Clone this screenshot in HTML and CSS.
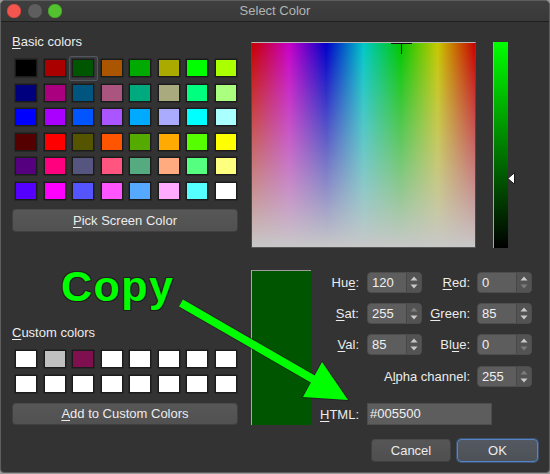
FILE: index.html
```html
<!DOCTYPE html>
<html>
<head>
<meta charset="utf-8">
<title>Select Color</title>
<link rel="stylesheet" href="styles.css">
</head>
<body>
<div class="window">
  <div class="titlebar">
    <div class="lights"><span class="light red"></span><span class="light gray"></span><span class="light green"></span></div>
    <div class="title">Select Color</div>
    <div></div>
  </div>
  <div class="content">
    <div class="left">
      <div class="label basic-label"><span class="mn">B</span>asic colors</div>
      <div class="swatches basic">
        <div class="cell"><div class="sw" style="background:#000000"></div></div>
        <div class="cell"><div class="sw" style="background:#aa0000"></div></div>
        <div class="cell sel"><div class="sw" style="background:#005500"></div></div>
        <div class="cell"><div class="sw" style="background:#aa5500"></div></div>
        <div class="cell"><div class="sw" style="background:#00aa00"></div></div>
        <div class="cell"><div class="sw" style="background:#aaaa00"></div></div>
        <div class="cell"><div class="sw" style="background:#00ff00"></div></div>
        <div class="cell"><div class="sw" style="background:#aaff00"></div></div>

        <div class="cell"><div class="sw" style="background:#00007f"></div></div>
        <div class="cell"><div class="sw" style="background:#aa007f"></div></div>
        <div class="cell"><div class="sw" style="background:#00557f"></div></div>
        <div class="cell"><div class="sw" style="background:#aa557f"></div></div>
        <div class="cell"><div class="sw" style="background:#00aa7f"></div></div>
        <div class="cell"><div class="sw" style="background:#aaaa7f"></div></div>
        <div class="cell"><div class="sw" style="background:#00ff7f"></div></div>
        <div class="cell"><div class="sw" style="background:#aaff7f"></div></div>

        <div class="cell"><div class="sw" style="background:#0000ff"></div></div>
        <div class="cell"><div class="sw" style="background:#aa00ff"></div></div>
        <div class="cell"><div class="sw" style="background:#0055ff"></div></div>
        <div class="cell"><div class="sw" style="background:#aa55ff"></div></div>
        <div class="cell"><div class="sw" style="background:#00aaff"></div></div>
        <div class="cell"><div class="sw" style="background:#aaaaff"></div></div>
        <div class="cell"><div class="sw" style="background:#00ffff"></div></div>
        <div class="cell"><div class="sw" style="background:#aaffff"></div></div>

        <div class="cell"><div class="sw" style="background:#550000"></div></div>
        <div class="cell"><div class="sw" style="background:#ff0000"></div></div>
        <div class="cell"><div class="sw" style="background:#555500"></div></div>
        <div class="cell"><div class="sw" style="background:#ff5500"></div></div>
        <div class="cell"><div class="sw" style="background:#55aa00"></div></div>
        <div class="cell"><div class="sw" style="background:#ffaa00"></div></div>
        <div class="cell"><div class="sw" style="background:#55ff00"></div></div>
        <div class="cell"><div class="sw" style="background:#ffff00"></div></div>

        <div class="cell"><div class="sw" style="background:#55007f"></div></div>
        <div class="cell"><div class="sw" style="background:#ff007f"></div></div>
        <div class="cell"><div class="sw" style="background:#55557f"></div></div>
        <div class="cell"><div class="sw" style="background:#ff557f"></div></div>
        <div class="cell"><div class="sw" style="background:#55aa7f"></div></div>
        <div class="cell"><div class="sw" style="background:#ffaa7f"></div></div>
        <div class="cell"><div class="sw" style="background:#55ff7f"></div></div>
        <div class="cell"><div class="sw" style="background:#ffff7f"></div></div>

        <div class="cell"><div class="sw" style="background:#5500ff"></div></div>
        <div class="cell"><div class="sw" style="background:#ff00ff"></div></div>
        <div class="cell"><div class="sw" style="background:#5555ff"></div></div>
        <div class="cell"><div class="sw" style="background:#ff55ff"></div></div>
        <div class="cell"><div class="sw" style="background:#55aaff"></div></div>
        <div class="cell"><div class="sw" style="background:#ffaaff"></div></div>
        <div class="cell"><div class="sw" style="background:#55ffff"></div></div>
        <div class="cell"><div class="sw" style="background:#ffffff"></div></div>
      </div>
      <button class="btn wide pick"><span class="mn">P</span>ick Screen Color</button>

      <div class="label custom-label"><span class="mn">C</span>ustom colors</div>
      <div class="swatches custom">
        <div class="cell"><div class="sw" style="background:#ffffff"></div></div>
        <div class="cell"><div class="sw" style="background:#c0c0c0"></div></div>
        <div class="cell"><div class="sw" style="background:#7f0f4f"></div></div>
        <div class="cell"><div class="sw" style="background:#ffffff"></div></div>
        <div class="cell"><div class="sw" style="background:#ffffff"></div></div>
        <div class="cell"><div class="sw" style="background:#ffffff"></div></div>
        <div class="cell"><div class="sw" style="background:#ffffff"></div></div>
        <div class="cell"><div class="sw" style="background:#ffffff"></div></div>

        <div class="cell"><div class="sw" style="background:#ffffff"></div></div>
        <div class="cell"><div class="sw" style="background:#ffffff"></div></div>
        <div class="cell"><div class="sw" style="background:#ffffff"></div></div>
        <div class="cell"><div class="sw" style="background:#ffffff"></div></div>
        <div class="cell"><div class="sw" style="background:#ffffff"></div></div>
        <div class="cell"><div class="sw" style="background:#ffffff"></div></div>
        <div class="cell"><div class="sw" style="background:#ffffff"></div></div>
        <div class="cell"><div class="sw" style="background:#ffffff"></div></div>
      </div>
      <button class="btn wide add"><span class="mn">A</span>dd to Custom Colors</button>
    </div>

    <div class="right">
      <div class="picker-row">
        <div class="picker">
          <span class="cross-h"></span><span class="cross-v"></span>
        </div>
        <div class="slider">
          <svg class="marker" viewBox="0 0 9 13" width="9" height="13"><path d="M7.5 0.8 L0.8 6.5 L7.5 12.2 Z" fill="#ffffff" stroke="#1a1a1a" stroke-width="1" stroke-linejoin="round"/></svg>
        </div>
      </div>

      <div class="lower">
        <div class="preview"></div>
        <div class="fields">
          <div class="flabel"><span>Hu<span class="mn">e</span>:</span></div>
          <div class="spin"><span class="val">120</span><span class="step"><svg viewBox="0 0 14 19" width="14" height="19"><path class="arr" d="M3.5 7.5 L7 3.5 L10.5 7.5 Z"/><path class="arr" d="M3.5 11.5 L7 15.5 L10.5 11.5 Z"/></svg></span></div>
          <div class="flabel c2"><span><span class="mn">R</span>ed:</span></div>
          <div class="spin"><span class="val">0</span><span class="step"><svg viewBox="0 0 14 19" width="14" height="19"><path class="arr" d="M3.5 7.5 L7 3.5 L10.5 7.5 Z"/><path class="arr dim" d="M3.5 11.5 L7 15.5 L10.5 11.5 Z"/></svg></span></div>

          <div class="flabel"><span><span class="mn">S</span>at:</span></div>
          <div class="spin"><span class="val">255</span><span class="step"><svg viewBox="0 0 14 19" width="14" height="19"><path class="arr dim" d="M3.5 7.5 L7 3.5 L10.5 7.5 Z"/><path class="arr" d="M3.5 11.5 L7 15.5 L10.5 11.5 Z"/></svg></span></div>
          <div class="flabel c2"><span><span class="mn">G</span>reen:</span></div>
          <div class="spin"><span class="val">85</span><span class="step"><svg viewBox="0 0 14 19" width="14" height="19"><path class="arr" d="M3.5 7.5 L7 3.5 L10.5 7.5 Z"/><path class="arr" d="M3.5 11.5 L7 15.5 L10.5 11.5 Z"/></svg></span></div>

          <div class="flabel"><span><span class="mn">V</span>al:</span></div>
          <div class="spin"><span class="val">85</span><span class="step"><svg viewBox="0 0 14 19" width="14" height="19"><path class="arr" d="M3.5 7.5 L7 3.5 L10.5 7.5 Z"/><path class="arr" d="M3.5 11.5 L7 15.5 L10.5 11.5 Z"/></svg></span></div>
          <div class="flabel c2"><span>Bl<span class="mn">u</span>e:</span></div>
          <div class="spin"><span class="val">0</span><span class="step"><svg viewBox="0 0 14 19" width="14" height="19"><path class="arr" d="M3.5 7.5 L7 3.5 L10.5 7.5 Z"/><path class="arr dim" d="M3.5 11.5 L7 15.5 L10.5 11.5 Z"/></svg></span></div>

          <div class="flabel alpha-label"><span>A<span class="mn">l</span>pha channel:</span></div>
          <div class="spin alpha"><span class="val">255</span><span class="step"><svg viewBox="0 0 14 19" width="14" height="19"><path class="arr dim" d="M3.5 7.5 L7 3.5 L10.5 7.5 Z"/><path class="arr" d="M3.5 11.5 L7 15.5 L10.5 11.5 Z"/></svg></span></div>

          <div class="flabel html-label"><span><span class="mn">H</span>TML:</span></div>
          <div class="line">#005500</div>
        </div>
      </div>

      <div class="actions">
        <button class="btn cancel">Cancel</button>
        <button class="btn ok">OK</button>
      </div>
    </div>
  </div>
</div>

<div class="annot">Copy</div>
<svg class="arrow" width="550" height="474" viewBox="0 0 550 474">
  <line x1="181" y1="303" x2="318" y2="382" stroke="#1c1c1c" stroke-opacity="0.55" stroke-width="10"/>
  <polygon points="348,400 303,397 322,362" fill="none" stroke="#1c1c1c" stroke-opacity="0.55" stroke-width="2" stroke-linejoin="round"/>
  <line x1="181" y1="303" x2="318" y2="382" stroke="#00ff00" stroke-width="8"/>
  <polygon points="348,400 303,397 322,362" fill="#00ff00"/>
</svg>
</body>
</html>
```

FILE: styles.css
```css
* { box-sizing: border-box; }

html, body {
  margin: 0;
  padding: 0;
}

body {
  width: 550px;
  height: 474px;
  background: #9a9a9a;
  font-family: "Liberation Sans", Arial, sans-serif;
  font-size: 13px;
  color: #e9e9e9;
  overflow: hidden;
}

.window {
  width: 550px;
  height: 473px;
  background: #333333;
  border: 1px solid #5e5e5e;
  border-radius: 5px 5px 4px 4px;
  overflow: hidden;
}

/* title bar */
.titlebar {
  height: 21px;
  display: grid;
  grid-template-columns: 1fr auto 1fr;
  align-items: center;
  background: linear-gradient(#3f3f3f, #393939);
  border-bottom: 1px solid #1f1f1f;
}

.lights {
  display: flex;
  gap: 6.5px;
  padding-left: 6px;
}

.light {
  width: 14px;
  height: 14px;
  border-radius: 50%;
}

.light.red { background: #f4564f; box-shadow: inset 0 0 0 0.5px #c8413b; }
.light.gray { background: #5e5e5e; }
.light.green { background: #54c22f; box-shadow: inset 0 0 0 0.5px #3f9a22; }

.title {
  color: #b4b4b4;
  font-size: 13px;
  line-height: 16px;
}

/* content */
.content {
  display: flex;
  gap: 13px;
  padding: 0 11px;
}

.left {
  width: 226px;
  display: flex;
  flex-direction: column;
}

.right {
  width: 287px;
  display: flex;
  flex-direction: column;
}

.label {
  height: 16px;
  line-height: 16px;
  color: #ececec;
}

.mn {
  text-decoration: underline;
  text-underline-offset: 2px;
  text-decoration-thickness: 1px;
}

.basic-label { margin-top: 12px; }
.custom-label { margin-top: 93px; }

.swatches {
  display: grid;
  grid-template-columns: repeat(8, 28.5px);
  grid-auto-rows: 24.5px;
  margin-top: 6px;
}

.cell {
  position: relative;
}

.sw {
  margin: 3px 0 0 3px;
  width: 22px;
  height: 18px;
  border: 1px solid #1b1b1b;
  box-shadow: 0 0 0 0.5px rgba(0, 0, 0, 0.4);
}

.cell.sel {
  border: 1px solid #52575f;
  border-radius: 2px;
  background: #393b3f;
  width: 29px;
}

.cell.sel .sw {
  margin: 2px 0 0 2px;
}

/* buttons */
.btn {
  font-family: "Liberation Sans", Arial, sans-serif;
  font-size: 13px;
  color: #ececec;
  background: linear-gradient(#575757, #515151);
  border: 1px solid #404040;
  border-top-color: #4a4a4a;
  border-radius: 4px;
  padding: 0;
  height: 23px;
  line-height: 21px;
  text-align: center;
}

.btn.wide { width: 226px; }
.btn.pick { margin-top: 6px; }
.btn.add { margin-top: 7px; height: 22px; line-height: 20px; }

/* picker */
.picker-row {
  display: flex;
  gap: 17px;
  margin-top: 20px;
  height: 206px;
}

.picker {
  position: relative;
  width: 225px;
  height: 206px;
  border-top: 1px solid #b8b8b8;
  border-left: 1px solid #4a4a4a;
  border-right: 1px solid #4a4a4a;
  border-bottom: 1px solid #575757;
  background:
    linear-gradient(to bottom, rgba(200, 200, 200, 0), rgb(200, 200, 200)),
    linear-gradient(to right, #c80000, #c800c8 16.667%, #0000c8 33.333%, #00c8c8 50%, #00c800 66.667%, #c8c800 83.333%, #c80000);
}

.cross-h {
  position: absolute;
  left: 139px;
  top: 0;
  width: 21px;
  height: 1px;
  background: #111111;
}

.cross-v {
  position: absolute;
  left: 149px;
  top: 0;
  width: 1px;
  height: 11px;
  background: #111111;
}

.slider {
  position: relative;
  width: 15px;
  height: 206px;
  border-left: 1px solid #a9a9a9;
  background: linear-gradient(to bottom, #00ff00, #000000);
}

.marker {
  position: absolute;
  left: 13px;
  top: 130px;
  display: block;
}

/* lower area */
.lower {
  display: flex;
  margin-top: 22px;
  height: 155px;
}

.preview {
  width: 60px;
  height: 155px;
  background: #005500;
  border-top: 1px solid #9c9c9c;
  border-left: 1px solid #a8a8a8;
}

.fields {
  flex: 1;
  display: grid;
  grid-template-columns: 56px 55px 55px 55px;
  grid-template-rows: 21px 21px 21px 22px 28px;
  row-gap: 10px;
  padding-top: 2px;
}

.flabel {
  display: flex;
  align-items: center;
  justify-content: flex-end;
  padding-right: 8px;
  color: #ececec;
  white-space: nowrap;
}

.flabel.c2 { padding-right: 7px; }

.alpha-label {
  grid-column: 1 / span 3;
  padding-right: 7px;
  align-self: end;
  height: 21px;
}

.html-label {
  grid-column: 1;
  align-self: end;
  height: 22px;
}

.spin {
  display: flex;
  height: 21px;
  background: #5d5d5d;
  border: 1px solid #4d4d4d;
  border-radius: 4px;
}

.spin.alpha {
  grid-column: 4;
  align-self: end;
}

.spin .val {
  flex: 1;
  padding-left: 4px;
  line-height: 19px;
  color: #f0f0f0;
}

.spin .step {
  width: 15px;
  background: #535353;
  border-left: 1px solid #474747;
  border-radius: 0 3px 3px 0;
}

.spin .step svg { display: block; }

.arr { fill: #c9c9c9; }
.arr.dim { fill: #7c7c7c; }

.line {
  grid-column: 2 / span 3;
  justify-self: start;
  align-self: end;
  width: 125px;
  height: 22px;
  background: #5d5d5d;
  border: 1px solid #4d4d4d;
  padding-left: 2px;
  line-height: 20px;
  color: #f0f0f0;
}

/* dialog buttons */
.actions {
  display: flex;
  justify-content: flex-end;
  gap: 6px;
  margin-top: 14px;
}

.btn.cancel {
  width: 80px;
  background: linear-gradient(#565656, #4f4f4f);
}

.btn.ok {
  width: 81px;
  background: linear-gradient(#545860, #4d5158);
  border: 1px solid #5684c4;
  box-shadow: 0 0 0 1px rgba(70, 110, 170, 0.55);
}

/* annotation overlay */
.annot {
  position: absolute;
  left: 61px;
  top: 265px;
  font-family: "Liberation Sans", Arial, sans-serif;
  font-weight: bold;
  font-size: 43px;
  line-height: 42px;
  letter-spacing: 1.5px;
  color: #00ff00;
  text-shadow: -1px -1px 0 #1e1e1e, 1px -1px 0 #1e1e1e, -1px 1px 0 #1e1e1e, 1px 1px 0 #1e1e1e;
}

.arrow {
  position: absolute;
  left: 0;
  top: 0;
  pointer-events: none;
}
```
